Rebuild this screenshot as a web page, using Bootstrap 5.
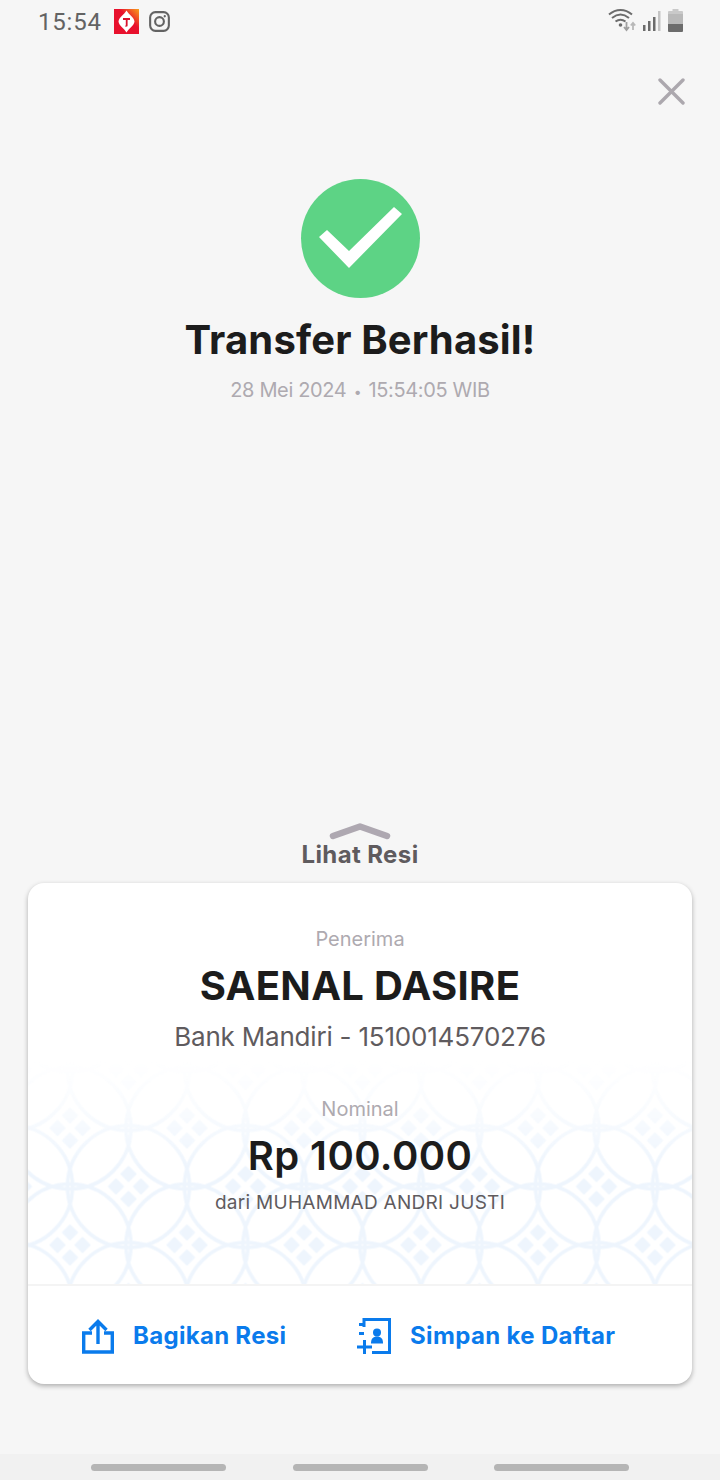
<!DOCTYPE html>
<html lang="id"><head><meta charset="utf-8"><title>Transfer Berhasil</title>
<link rel="stylesheet" href="https://cdn.jsdelivr.net/npm/bootstrap@5.3.0/dist/css/bootstrap.min.css">
<style>
html,body{margin:0;height:1480px;overflow:hidden}
body{background:#f6f6f6;font-family:"Inter","Noto Sans",sans-serif;color:#1c1c1c;width:720px}
.screen{height:1480px}
.stbar{height:43px;padding:0 37px 0 38px}
.clock{font-family:"Roboto",sans-serif;font-size:24px;color:#636363;letter-spacing:.8px;line-height:44px}
.igi{margin-left:2px}
.sysicons{gap:7px;padding-bottom:2px}
.closerow{height:62px;padding-right:35px}
.okdot{width:119px;height:119px;background:#5dd385;margin-top:74px}
.okdot svg{margin-bottom:2px}
.headline{font-size:40px;font-weight:700;line-height:48px;margin:18px 0 0;letter-spacing:.15px}
.when{font-size:20px;color:#aeaab0;height:24px;line-height:24px;margin-top:14px;letter-spacing:-.35px}
.dotsep{font-size:14px;line-height:1;padding:0 2px}
.spacer{height:421px}
.peek{font-size:24px;font-weight:700;color:#5f5b5e;line-height:30px;margin-top:0;letter-spacing:.4px}
.sheet{margin:13px 28px 0;width:664px;height:501px;border:0;border-radius:16px;box-shadow:0 2px 5px rgba(0,0,0,.3);overflow:hidden}
.sheet-top{height:401px;padding-top:44px;position:relative}
.sheet-top>*{position:relative}
.batik{position:absolute;left:0;top:177px;width:664px;height:224px;-webkit-mask-image:linear-gradient(to bottom,transparent,rgba(0,0,0,.35) 22%,#000 48%);mask-image:linear-gradient(to bottom,transparent,rgba(0,0,0,.35) 22%,#000 48%)}
.lbl{font-size:20px;color:#aeaab0;line-height:24px}
.who{font-size:40px;font-weight:700;line-height:48px;margin-top:11px;letter-spacing:.3px}
.acct{font-size:26px;color:#5f5b5e;line-height:34px;margin-top:10px;letter-spacing:-.2px}
.nom{margin-top:43px}
.amt{font-size:40px;font-weight:600;line-height:48px;margin-top:11px;letter-spacing:.4px}
.from{font-size:19px;color:#5f5b5e;line-height:24px;margin-top:11px;letter-spacing:.28px}
.acts{height:100px;border-top:2px solid #f4f4f4;padding:2px 0 0 54px}
.actlink{font-size:24px;font-weight:700;color:#0a7bec;text-decoration:none;letter-spacing:.3px}
.act1{width:275px;gap:19px}
.act2{gap:19px;letter-spacing:.35px}
.navstrip{height:26px;margin-top:70px;background:#f1f1f1;padding:0 91px}
.pill{width:135px;height:7px;border-radius:4px;background:#b5b5b5}
</style></head><body>
<div class="screen d-flex flex-column">
 <div class="stbar d-flex justify-content-between align-items-center">
  <div class="d-flex align-items-center gap-2">
   <span class="clock">15:54</span>
   <svg width="25" height="25" viewBox="0 0 25 25" class="ms-1"><defs><linearGradient id="g1" x1="0" y1="1" x2="1" y2="0"><stop offset=".6" stop-color="#e8112d"/><stop offset="1" stop-color="#f9a01b"/></linearGradient></defs><rect width="25" height="25" fill="url(#g1)"/><path d="M12.5 1.5C15 6 20 8 20.5 12.5 20 17 15 19 12.5 23.5 10 19 5 17 4.500 12.500 5 8 10 6 12.500 1.500Z" fill="#fff"/><path d="M9 9h7v2h-2.400v5.500c0 .8-.6 1.200-1.600 1.200-.8 0-1.200-.6-1.200-.6l1-.7V11H9Z" fill="#d9122c"/></svg>
   <svg width="21" height="21" viewBox="0 0 22 22" fill="none" stroke="#636363" stroke-width="2.200" class="igi"><rect x="1.200" y="1.200" width="19.600" height="19.600" rx="5.500"/><circle cx="11" cy="11" r="4.600"/><circle cx="16.500" cy="5.500" r="1.200" fill="#636363" stroke="none"/></svg>
  </div>
  <div class="d-flex align-items-center sysicons">
   <svg width="28" height="24" viewBox="0 0 28 24" fill="none"><path d="M1 5.500C8 -.5 17 -.5 24 5.500M4 9C9.500 4.500 15.500 4.500 21 9M7.500 12.500c3.500-2.500 6.500-2.500 10 0" stroke="#6c6c6c" stroke-width="2"/><circle cx="12.500" cy="16" r="1.800" fill="#6c6c6c"/><path d="M18.500 13v7M16 18l2.500 3 2.500-3" stroke="#a0a0a0" stroke-width="1.800"/><path d="M25 21v-7M22.800 16.500l2.200-2.700 2.200 2.700" stroke="#b8b8b8" stroke-width="1.800"/></svg>
   <svg width="18" height="20" viewBox="0 0 18 20"><rect x="0" y="14" width="2.500" height="6" fill="#6c6c6c"/><rect x="5" y="10" width="2.500" height="10" fill="#6c6c6c"/><rect x="10" y="6" width="2.500" height="14" fill="#6c6c6c"/><rect x="15" y="0" width="2.500" height="20" fill="#c4c4c4"/></svg>
   <svg width="15" height="23" viewBox="0 0 15 23"><path d="M4.500 0h6v2H14q1 0 1 1v2H0V3q0-1 1-1h3.500Z" fill="#c9c9c9"/><rect y="5" width="15" height="10" fill="#b9b9b9"/><path d="M0 15h15v7q0 1-1 1H1q-1 0-1-1Z" fill="#6c6c6c"/></svg>
  </div>
 </div>
 <div class="closerow d-flex justify-content-end align-items-end">
  <svg width="27" height="27" viewBox="0 0 27 27" fill="none" stroke="#aca8ae" stroke-width="3.400" stroke-linecap="round"><path d="M2 2l23 23M25 2 2 25"/></svg>
 </div>
 <div class="d-flex flex-column align-items-center text-center">
  <div class="okdot rounded-circle d-flex align-items-center justify-content-center">
   <svg width="83" height="61" viewBox="0 0 83 61"><path d="M0 30 8 23 30 44 75 0 83 7 30 61Z" fill="#fff"/></svg>
  </div>
  <h1 class="headline">Transfer Berhasil!</h1>
  <div class="when">28 Mei 2024 <span class="dotsep">•</span> 15:54:05 WIB</div>
  <div class="spacer"></div>
  <svg width="62" height="17" viewBox="0 0 62 17" fill="none"><path d="M4 13 31 3.500 58 13" stroke="#aea8b1" stroke-width="6.500" stroke-linecap="round" stroke-linejoin="round"/></svg>
  <div class="peek">Lihat Resi</div>
 </div>
 <div class="card sheet">
  <div class="sheet-top text-center">
   <svg class="batik" viewBox="0 0 664 224"><defs>
    <g id="dm" fill="#eef5fd" stroke="#eef5fd" stroke-width="2" stroke-linejoin="round"><path d="M0-19.500 7-12.500 0-5.500-7-12.500ZM0 5.500 7 12.500 0 19.500-7 12.500ZM-12.500-7-5.500 0-12.500 7-19.500 0ZM12.500-7 19.500 0 12.500 7 5.500 0Z"/></g>
    <pattern id="kw" width="117" height="117" patternUnits="userSpaceOnUse" x="-16.500" y="9.500">
     <g fill="none" stroke="#eef5fd" stroke-width="3.600"><circle cx="58.500" cy="58.500" r="61"/><circle cx="0" cy="0" r="61"/><circle cx="117" cy="0" r="61"/><circle cx="0" cy="117" r="61"/><circle cx="117" cy="117" r="61"/><circle cx="-58.500" cy="58.500" r="61"/><circle cx="175.500" cy="58.500" r="61"/><circle cx="58.500" cy="-58.500" r="61"/><circle cx="58.500" cy="175.500" r="61"/></g>
     <use href="#dm" x="58.500" y="58.500"/><use href="#dm" x="0" y="0"/><use href="#dm" x="117" y="0"/><use href="#dm" x="0" y="117"/><use href="#dm" x="117" y="117"/>
    </pattern></defs><rect width="664" height="224" fill="url(#kw)"/></svg>
   <div class="lbl">Penerima</div>
   <div class="who">SAENAL DASIRE</div>
   <div class="acct">Bank Mandiri - 1510014570276</div>
   <div class="lbl nom">Nominal</div>
   <div class="amt">Rp 100.000</div>
   <div class="from">dari MUHAMMAD ANDRI JUSTI</div>
  </div>
  <div class="acts d-flex align-items-center">
   <a href="#" class="actlink act1 d-flex align-items-center">
    <svg width="32" height="35" viewBox="0 0 32 35" fill="none" stroke="#0a7bec" stroke-width="3.400"><path d="M10 14H1.700v19h28.600V14H22"/><path d="M16 25V3M7.500 11 16 2.500 24.500 11"/></svg>
    <span>Bagikan Resi</span></a>
   <a href="#" class="actlink act2 d-flex align-items-center">
    <svg width="34" height="36" viewBox="0 0 34 36" fill="none" stroke="#0a7bec" stroke-width="3"><path d="M7 9V1.500h25.500v33H15"/><path d="M2 6.500h5M2 15.500h5M0 29h15M7.500 22v14"/><circle cx="20" cy="14.500" r="4" fill="#0a7bec" stroke="none"/><path d="M14 25.500c0-5 2-7 6-7s6 2 6 7Z" fill="#0a7bec" stroke="none"/></svg>
    <span>Simpan ke Daftar</span></a>
  </div>
 </div>
 <div class="navstrip d-flex justify-content-between align-items-center"><span class="pill"></span><span class="pill"></span><span class="pill"></span></div>
</div>
</body></html>
